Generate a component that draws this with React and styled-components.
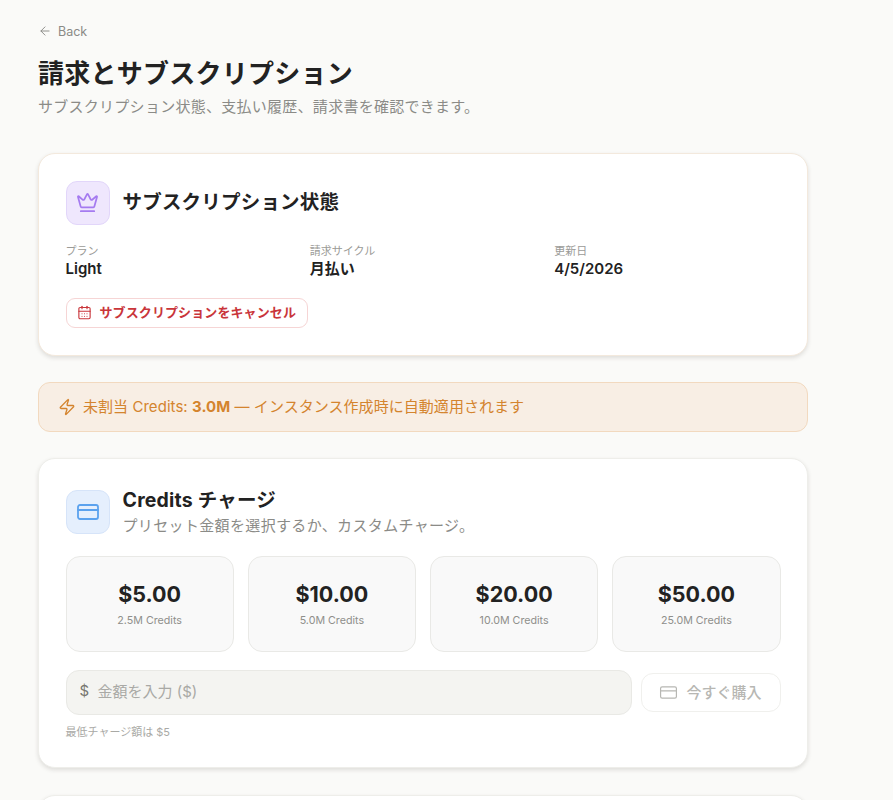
import styled, { createGlobalStyle } from "styled-components";
import { ArrowLeft, Crown, CalendarDays, Zap, CreditCard } from "lucide-react";

const GlobalStyle = createGlobalStyle`
html, body {
    margin: 0;
    height: 800px;
    overflow: hidden;
    background: #fafaf8;
}
* { box-sizing: border-box; }
body {
    font-family: Inter, "Noto Sans CJK JP", sans-serif;
    color: #1f1f1f;
}
`;

const presets = [
    { price: "$5.00", credits: "2.5M Credits" },
    { price: "$10.00", credits: "5.0M Credits" },
    { price: "$20.00", credits: "10.0M Credits" },
    { price: "$50.00", credits: "25.0M Credits" },
];

export default function App() {
    return (
        <Page>
            <GlobalStyle />
            <BackLink>
                <ArrowLeft size={14} strokeWidth={1.6} />
                Back
            </BackLink>
            <Title>請求とサブスクリプション</Title>
            <Subtitle>サブスクリプション状態、支払い履歴、請求書を確認できます。</Subtitle>

            <Card $pad="26.5px 26.5px 27px" $mt="35px" $warm>
                <CardHead>
                    <IconBox $bg="#efe7fd" $border="#e2d6fa" $color="#a57bf0">
                        <Crown size={23} strokeWidth={1.8} />
                    </IconBox>
                    <CardTitle>サブスクリプション状態</CardTitle>
                </CardHead>
                <InfoGrid>
                    <div>
                        <InfoLabel>プラン</InfoLabel>
                        <InfoValue>Light</InfoValue>
                    </div>
                    <div>
                        <InfoLabel>請求サイクル</InfoLabel>
                        <InfoValue>月払い</InfoValue>
                    </div>
                    <div>
                        <InfoLabel>更新日</InfoLabel>
                        <InfoValue>4/5/2026</InfoValue>
                    </div>
                </InfoGrid>
                <CancelButton>
                    <CalendarDays size={15} strokeWidth={1.8} />
                    サブスクリプションをキャンセル
                </CancelButton>
            </Card>

            <Notice>
                <Zap size={18} strokeWidth={1.8} />
                <NoticeText>未割当 Credits: <b>3.0M</b> — インスタンス作成時に自動適用されます</NoticeText>
            </Notice>

            <Card $pad="31px 26.5px 26.5px" $mt="26.5px">
                <CardHead $top>
                    <IconBox $bg="#e5effd" $border="#d6e4f9" $color="#5ba2ee">
                        <CreditCard size={24} strokeWidth={1.8} />
                    </IconBox>
                    <HeadText>
                        <CardTitle $tight>Credits チャージ</CardTitle>
                        <CardNote>プリセット金額を選択するか、カスタムチャージ。</CardNote>
                    </HeadText>
                </CardHead>
                <PresetGrid>
                    {presets.map((p) => (
                        <Preset key={p.price}>
                            <PresetPrice>{p.price}</PresetPrice>
                            <PresetCredits>{p.credits}</PresetCredits>
                        </Preset>
                    ))}
                </PresetGrid>
                <ChargeRow>
                    <AmountField>
                        <Dollar>$</Dollar>
                        <AmountHint>金額を入力 ($)</AmountHint>
                    </AmountField>
                    <BuyButton>
                        <CreditCard size={19} strokeWidth={1.5} />
                        今すぐ購入
                    </BuyButton>
                </ChargeRow>
                <MinNote>最低チャージ額は $5</MinNote>
            </Card>

            <Card $pad="30px 26px" $mt="27px" />
        </Page>
    );
}

const Page = styled.div`
width: 770px;
margin-left: 38px;
padding-top: 23px;
`;

const BackLink = styled.div`
display: flex;
align-items: center;
gap: 6px;
height: 16px;
font-size: 12.5px;
color: #8a8a86;
`;

const Title = styled.h1`
margin: 17px 0 0;
font-size: 26px;
line-height: 36px;
font-weight: 700;
letter-spacing: 0.25px;
color: #222;
`;

const Subtitle = styled.p`
margin: 4px 0 0;
font-size: 15px;
line-height: 22px;
letter-spacing: 0.27px;
color: #8b8b87;
`;

const Card = styled.section`
margin-top: ${(p) => p.$mt};
padding: ${(p) => p.$pad};
min-height: 100px;
background: #fff;
border: 1.5px solid ${(p) => (p.$warm ? "#f3e9dd" : "#eeeeea")};
border-radius: 17px;
box-shadow: 0 2px 4px rgba(60, 50, 40, 0.14);
`;

const CardHead = styled.div`
display: flex;
align-items: ${(p) => (p.$top ? "flex-start" : "center")};
gap: 13px;
`;

const HeadText = styled.div`
margin-top: -1px;
`;

const IconBox = styled.div`
display: flex;
align-items: center;
justify-content: center;
flex: none;
width: 44px;
height: 44px;
background: ${(p) => p.$bg};
border: 1px solid ${(p) => p.$border};
border-radius: 11px;
color: ${(p) => p.$color};
`;

const CardTitle = styled.h2`
margin: 0;
padding-bottom: ${(p) => (p.$tight ? "0" : "2px")};
font-size: 19.5px;
line-height: ${(p) => (p.$tight ? "22px" : "26px")};
font-weight: 700;
letter-spacing: 0.2px;
color: #222;
`;

const CardNote = styled.p`
margin: 4px 0 0;
font-size: 15px;
line-height: 22px;
letter-spacing: 0.35px;
color: #8b8b87;
`;

const InfoGrid = styled.div`
display: grid;
grid-template-columns: repeat(3, 1fr);
column-gap: 18px;
margin-top: 19.5px;
`;

const InfoLabel = styled.div`
font-size: 11px;
line-height: 15px;
color: #9b9b97;
`;

const InfoValue = styled.div`
margin-top: -1px;
font-size: 15px;
line-height: 22px;
font-weight: 600;
color: #222;
`;

const CancelButton = styled.div`
display: inline-flex;
align-items: center;
gap: 8px;
height: 30px;
margin-top: 17.5px;
padding: 0 11px 2px 10px;
background: #fff;
border: 1px solid #f6d5d5;
border-radius: 9px;
font-size: 13px;
font-weight: 700;
letter-spacing: 0.1px;
color: #c9353a;
svg { margin-top: 2px; }
`;

const Notice = styled.div`
display: flex;
align-items: center;
gap: 7px;
height: 50px;
margin-top: 26px;
padding: 0 19px;
background: #f8eee4;
border: 1px solid #f2d9bf;
border-radius: 12px;
font-size: 15px;
color: #d4842e;
`;

const NoticeText = styled.span`
padding-bottom: 2px;
letter-spacing: 0.05px;
b { font-weight: 700; }
`;

const PresetGrid = styled.div`
display: grid;
grid-template-columns: repeat(4, 1fr);
gap: 14px;
margin-top: 19px;
`;

const Preset = styled.div`
display: flex;
flex-direction: column;
align-items: center;
justify-content: center;
height: 96px;
background: #f9f9f9;
border: 1px solid #e9e9e6;
border-radius: 14px;
`;

const PresetPrice = styled.div`
font-size: 21.5px;
line-height: 30px;
font-weight: 700;
color: #222;
`;

const PresetCredits = styled.div`
margin-top: 4px;
font-size: 10.7px;
line-height: 16px;
color: #8f8f8b;
`;

const ChargeRow = styled.div`
display: flex;
align-items: center;
gap: 9px;
margin-top: 18px;
`;

const AmountField = styled.div`
display: flex;
align-items: center;
flex: 1;
height: 45px;
padding: 0 13px 4px;
background: #f4f4f1;
border: 1px solid #e9e9e5;
border-radius: 13px;
font-size: 15px;
`;

const Dollar = styled.span`
width: 18px;
color: #77776f;
`;

const AmountHint = styled.span`
color: #a9a9a5;
`;

const BuyButton = styled.div`
display: flex;
align-items: center;
justify-content: center;
gap: 8px;
flex: none;
width: 140px;
height: 39px;
padding-bottom: 3px;
background: #fff;
border: 1px solid #f0f0ed;
border-radius: 12px;
font-size: 15px;
font-weight: 500;
color: #b7b7b3;
svg { margin-top: 3px; }
`;

const MinNote = styled.div`
margin-top: 10px;
font-size: 11px;
line-height: 15px;
color: #a9a9a5;
`;
